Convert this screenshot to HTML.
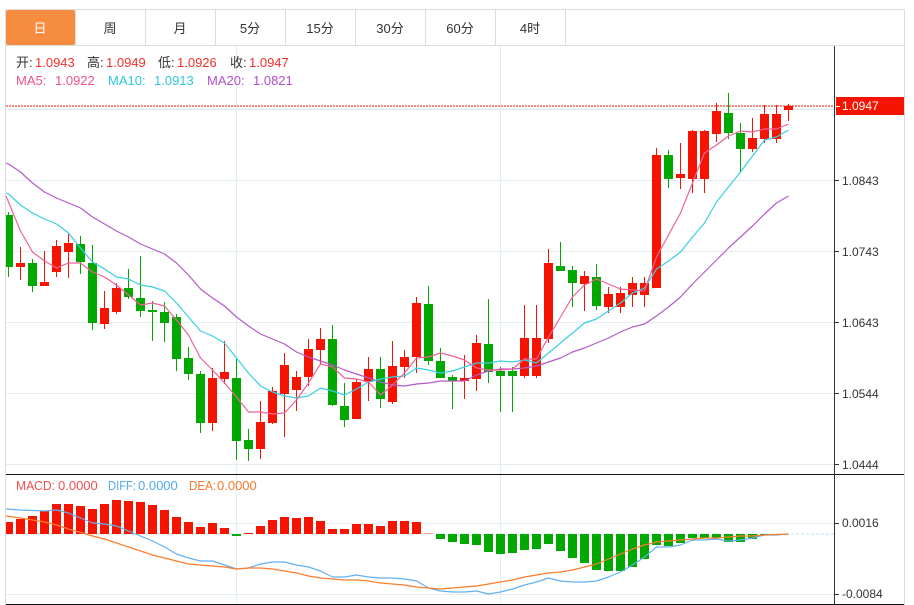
<!DOCTYPE html>
<html><head><meta charset="utf-8"><style>
html,body{margin:0;padding:0;background:#fff;width:914px;height:605px;overflow:hidden}
svg{position:absolute;left:0;top:0}
text{font-family:"Liberation Sans","Noto Sans CJK SC",sans-serif}
.tab{font-size:13px;text-anchor:middle;fill:#333}
.lg{font-size:13px}
.ax{font-size:12px;fill:#333}
</style></head><body>
<svg width="914" height="605" viewBox="0 0 914 605" xmlns="http://www.w3.org/2000/svg">
<g shape-rendering="crispEdges">
<path d="M5 9h900v1H5zM5 45h900v1H5zM5 9h1v596H5zM904 9h1v596h-1zM75 10h1v35h-1zM145 10h1v35h-1zM215 10h1v35h-1zM285 10h1v35h-1zM355 10h1v35h-1zM425 10h1v35h-1zM495 10h1v35h-1zM565 10h1v35h-1z" fill="#dddddd"/>
<path d="M6 109h828v1H6zM6 180h828v1H6zM6 251h828v1H6zM6 322h828v1H6zM6 393h828v1H6zM6 464h828v1H6zM6 523h828v1H6zM6 594h828v1H6zM236 46h1v558h-1zM500 46h1v558h-1z" fill="#e4edf2"/>
<rect x="6" y="10" width="69" height="35" rx="2" fill="#f58c40" shape-rendering="auto"/>
<path d="M6 474h898v1H6zM6 604h898v1H6z" fill="#111"/>
<path d="M834 46h1v558h-1zM835 180h4v1h-4zM835 251h4v1h-4zM835 322h4v1h-4zM835 393h4v1h-4zM835 464h4v1h-4zM835 523h4v1h-4zM835 594h4v1h-4z" fill="#333"/>
<rect x="836" y="97" width="68" height="18" fill="#f61300"/>
<rect x="836" y="106" width="4" height="1" fill="#fff"/>
<line x1="6" y1="106" x2="834" y2="106" stroke="#f8887c" stroke-width="2" stroke-dasharray="2 1"/>
<line x1="6" y1="534" x2="834" y2="534" stroke="#bfe3f2" stroke-width="1" stroke-dasharray="3 2"/>

<path fill="#f61300" d="M16 263h9v4h-9zM20 247h1v33h-1zM40 282h9v4h-9zM44 251h1v35h-1zM52 246h9v26h-9zM56 240h1v37h-1zM64 243h9v9h-9zM68 234h1v44h-1zM100 308h9v16h-9zM104 291h1v38h-1zM112 288h9v24h-9zM116 283h1v31h-1zM208 378h9v45h-9zM212 368h1v63h-1zM220 372h9v7h-9zM224 341h1v43h-1zM256 422h9v27h-9zM260 401h1v58h-1zM268 391h9v32h-9zM272 387h1v37h-1zM280 365h9v29h-9zM284 353h1v84h-1zM292 377h9v13h-9zM296 371h1v40h-1zM304 349h9v28h-9zM308 339h1v47h-1zM316 339h9v11h-9zM320 328h1v37h-1zM352 382h9v37h-9zM356 379h1v40h-1zM364 369h9v13h-9zM368 357h1v44h-1zM388 366h9v36h-9zM392 341h1v63h-1zM400 357h9v10h-9zM404 350h1v28h-1zM412 303h9v54h-9zM416 297h1v76h-1zM460 378h9v3h-9zM464 355h1v44h-1zM472 343h9v36h-9zM476 335h1v56h-1zM520 338h9v38h-9zM524 305h1v73h-1zM532 338h9v38h-9zM536 305h1v73h-1zM544 263h9v76h-9zM548 249h1v94h-1zM580 276h9v8h-9zM584 271h1v40h-1zM604 294h9v13h-9zM608 287h1v26h-1zM616 293h9v14h-9zM620 287h1v26h-1zM628 283h9v12h-9zM632 277h1v30h-1zM640 283h9v12h-9zM644 277h1v30h-1zM652 155h9v133h-9zM656 148h1v140h-1zM676 174h9v4h-9zM680 143h1v46h-1zM688 131h9v48h-9zM692 130h1v63h-1zM700 131h9v48h-9zM704 130h1v63h-1zM712 111h9v23h-9zM716 103h1v39h-1zM748 138h9v11h-9zM752 118h1v34h-1zM760 114h9v25h-9zM764 105h1v38h-1zM772 114h9v25h-9zM776 105h1v38h-1zM784 106h9v4h-9zM788 104h1v17h-1z"/>
<path fill="#00a800" d="M6 215h7v52H6zM8 212h1v65H8zM28 263h9v23h-9zM32 259h1v33h-1zM76 244h9v18h-9zM80 236h1v38h-1zM88 263h9v60h-9zM92 245h1v85h-1zM124 288h9v9h-9zM128 269h1v30h-1zM136 298h9v13h-9zM140 256h1v61h-1zM148 310h9v2h-9zM152 301h1v40h-1zM160 312h9v11h-9zM164 302h1v40h-1zM172 317h9v42h-9zM176 314h1v57h-1zM184 358h9v16h-9zM188 347h1v33h-1zM196 374h9v49h-9zM200 371h1v62h-1zM232 378h9v63h-9zM236 359h1v101h-1zM244 440h9v9h-9zM248 429h1v32h-1zM328 339h9v66h-9zM332 325h1v81h-1zM340 406h9v14h-9zM344 383h1v44h-1zM376 369h9v30h-9zM380 357h1v51h-1zM424 304h9v57h-9zM428 286h1v79h-1zM436 361h9v17h-9zM440 348h1v30h-1zM448 377h9v4h-9zM452 375h1v34h-1zM484 344h9v28h-9zM488 299h1v84h-1zM496 371h9v5h-9zM500 367h1v45h-1zM508 371h9v5h-9zM512 367h1v45h-1zM556 266h9v5h-9zM560 242h1v29h-1zM568 270h9v13h-9zM572 266h1v41h-1zM592 277h9v29h-9zM596 264h1v46h-1zM664 155h9v24h-9zM668 150h1v38h-1zM724 113h9v20h-9zM728 93h1v46h-1zM736 133h9v16h-9zM740 123h1v50h-1z"/>

<path fill="#f61300" d="M6 522h7v12H6zM16 519h9v15h-9zM28 516h9v18h-9zM40 511h9v23h-9zM52 504h9v30h-9zM64 504h9v30h-9zM76 506h9v28h-9zM88 509h9v25h-9zM100 504h9v30h-9zM112 500h9v34h-9zM124 501h9v33h-9zM136 502h9v32h-9zM148 505h9v29h-9zM160 510h9v24h-9zM172 517h9v17h-9zM184 522h9v12h-9zM196 527h9v7h-9zM208 523h9v11h-9zM220 528h9v6h-9zM244 533h9v1h-9zM256 526h9v8h-9zM268 520h9v14h-9zM280 517h9v17h-9zM292 518h9v16h-9zM304 517h9v17h-9zM316 521h9v13h-9zM328 529h9v5h-9zM340 529h9v5h-9zM352 524h9v10h-9zM364 524h9v10h-9zM376 526h9v8h-9zM388 521h9v13h-9zM400 521h9v13h-9zM412 522h9v12h-9z"/>
<path fill="#f5a8a0" d="M424 533h9v1h-9z"/>
<path fill="#00a800" d="M232 534h9v2h-9zM436 534h9v5h-9zM448 534h9v8h-9zM460 534h9v10h-9zM472 534h9v11h-9zM484 534h9v18h-9zM496 534h9v20h-9zM508 534h9v19h-9zM520 534h9v16h-9zM532 534h9v15h-9zM544 534h9v10h-9zM556 534h9v17h-9zM568 534h9v24h-9zM580 534h9v29h-9zM592 534h9v36h-9zM604 534h9v37h-9zM616 534h9v37h-9zM628 534h9v33h-9zM640 534h9v25h-9zM652 534h9v11h-9zM664 534h9v12h-9zM676 534h9v9h-9zM688 534h9v4h-9zM700 534h9v4h-9zM712 534h9v4h-9zM724 534h9v8h-9zM736 534h9v8h-9zM748 534h9v5h-9zM760 534h9v1h-9z"/>
</g>

<g fill="none" stroke-width="1.2" stroke-linejoin="round">
<polyline stroke="#b45ac8" points="6,163 8.5,164 20.5,172 32.5,183 44.5,192 56.5,198 68.5,203 80.5,208 92.5,217 104.5,224 116.5,231 128.5,237 140.5,244 152.5,249 164.5,254 176.5,263 188.5,275 200.5,289 212.5,298 224.5,306 236.5,317 248.5,326 260.5,334 272.5,339 284.5,344 296.5,352 308.5,357 320.5,361 332.5,365 344.5,370 356.5,374 368.5,378 380.5,382 392.5,385 404.5,386 416.5,384 428.5,383 440.5,381 452.5,381 464.5,381 476.5,375 488.5,371 500.5,369 512.5,369 524.5,368 536.5,366 548.5,362 560.5,358 572.5,352 584.5,348 596.5,343 608.5,338 620.5,332 632.5,327 644.5,324 656.5,316 668.5,307 680.5,297 692.5,284 704.5,272 716.5,260 728.5,248 740.5,237 752.5,226 764.5,214 776.5,203 788.5,196"/>
<polyline stroke="#38cfe3" points="6,193 8.5,194 20.5,205 32.5,213 44.5,219 56.5,224 68.5,233 80.5,248 92.5,262 104.5,269 116.5,277 128.5,279 140.5,285 152.5,287 164.5,291 176.5,303 188.5,317 200.5,331 212.5,336 224.5,343 236.5,358 248.5,373 260.5,386 272.5,392 284.5,396 296.5,398 308.5,396 320.5,388 332.5,391 344.5,395 356.5,389 368.5,382 380.5,379 392.5,377 404.5,376 416.5,368 428.5,370 440.5,373 452.5,371 464.5,367 476.5,363 488.5,363 500.5,361 512.5,362 524.5,360 536.5,363 548.5,353 560.5,343 572.5,333 584.5,323 596.5,319 608.5,311 620.5,303 632.5,293 644.5,288 656.5,269 668.5,261 680.5,252 692.5,237 704.5,223 716.5,202 728.5,187 740.5,172 752.5,156 764.5,140 776.5,137 788.5,130"/>
<polyline stroke="#f0629a" points="6,196 20.5,231 32.5,252 44.5,261 56.5,268 68.5,263 80.5,263 92.5,272 104.5,277 116.5,285 128.5,295 140.5,305 152.5,303 164.5,306 176.5,320 188.5,335 200.5,358 212.5,370 224.5,383 236.5,397 248.5,412 260.5,412 272.5,414 284.5,413 296.5,400 308.5,383 320.5,364 332.5,367 344.5,378 356.5,379 368.5,382 380.5,395 392.5,385 404.5,373 416.5,358 428.5,357 440.5,353 452.5,356 464.5,360 476.5,368 488.5,370 500.5,370 512.5,369 524.5,359 536.5,359 548.5,337 560.5,317 572.5,297 584.5,285 596.5,279 608.5,284 620.5,289 632.5,290 644.5,291 656.5,257 668.5,235 680.5,213 692.5,183 704.5,153 716.5,145 728.5,136 740.5,131 752.5,132 764.5,129 776.5,129 788.5,124"/>
<polyline stroke="#62b0f2" points="6,509 20.5,510 44.5,511 56.5,510 68.5,513 80.5,518 92.5,523 104.5,524 116.5,526 128.5,531 140.5,536 152.5,541 164.5,547 176.5,554 188.5,558 200.5,561 212.5,561 224.5,565 236.5,569 248.5,568 260.5,564 272.5,562 284.5,562 296.5,565 308.5,567 320.5,571 332.5,577 344.5,577 356.5,575 368.5,577 380.5,578 392.5,578 404.5,579 416.5,581 428.5,588 440.5,591 452.5,592 464.5,592 476.5,591 488.5,594 500.5,592 512.5,589 524.5,585 536.5,582 548.5,578 560.5,581 572.5,582 584.5,582 596.5,581 608.5,577 620.5,572 632.5,565 644.5,557 656.5,547 668.5,547 680.5,545 692.5,540 704.5,540 716.5,539 728.5,541 740.5,540 752.5,538 764.5,535 776.5,535 788.5,534"/>
<polyline stroke="#fb7d2c" points="6,516 20.5,518 44.5,522 56.5,525 68.5,529 92.5,536 104.5,539 116.5,543 128.5,547 140.5,551 152.5,555 164.5,558 176.5,561 188.5,564 200.5,565 212.5,566 224.5,567 236.5,569 248.5,568 260.5,568 272.5,569 284.5,571 296.5,573 308.5,576 320.5,578 332.5,579 344.5,580 356.5,580 368.5,581 380.5,583 392.5,584 404.5,585 416.5,587 428.5,588 440.5,589 452.5,588 464.5,587 476.5,586 488.5,584 500.5,582 512.5,580 524.5,577 536.5,575 548.5,573 560.5,572 572.5,570 584.5,567 596.5,564 608.5,559 620.5,554 632.5,549 644.5,545 656.5,542 668.5,541 680.5,540 692.5,539 704.5,538 716.5,538 728.5,537 740.5,536 752.5,536 764.5,535 776.5,534.5 788.5,534"/>
</g>

<text class="tab" x="40" y="33" fill="#fff" style="fill:#fff">日</text>
<text class="tab" x="110" y="33">周</text>
<text class="tab" x="180" y="33">月</text>
<text class="tab" x="250" y="33">5分</text>
<text class="tab" x="320" y="33">15分</text>
<text class="tab" x="390" y="33">30分</text>
<text class="tab" x="460" y="33">60分</text>
<text class="tab" x="530" y="33">4时</text>

<g class="lg">
<text class="lg" x="16" y="67" fill="#333">开:</text><text class="lg" x="35" y="67" fill="#f5302a">1.0943</text>
<text class="lg" x="87" y="67" fill="#333">高:</text><text class="lg" x="106" y="67" fill="#f5302a">1.0949</text>
<text class="lg" x="158" y="67" fill="#333">低:</text><text class="lg" x="177" y="67" fill="#f5302a">1.0926</text>
<text class="lg" x="230" y="67" fill="#333">收:</text><text class="lg" x="249" y="67" fill="#f5302a">1.0947</text>
<text class="lg" x="16" y="85" fill="#f0508c">MA5:</text><text class="lg" x="55" y="85" fill="#f0508c">1.0922</text>
<text class="lg" x="108" y="85" fill="#2fc7dd">MA10:</text><text class="lg" x="154" y="85" fill="#2fc7dd">1.0913</text>
<text class="lg" x="207" y="85" fill="#b050c8">MA20:</text><text class="lg" x="253" y="85" fill="#b050c8">1.0821</text>
<text class="lg" x="16" y="490" fill="#f05050" textLength="39" lengthAdjust="spacingAndGlyphs">MACD:</text><text class="lg" x="58" y="490" fill="#f05050">0.0000</text>
<text class="lg" x="108" y="490" fill="#50a8f0" textLength="28" lengthAdjust="spacingAndGlyphs">DIFF:</text><text class="lg" x="138" y="490" fill="#50a8f0">0.0000</text>
<text class="lg" x="189" y="490" fill="#f87a30" textLength="27" lengthAdjust="spacingAndGlyphs">DEA:</text><text class="lg" x="217" y="490" fill="#f87a30">0.0000</text>
</g>

<text x="842" y="110" font-size="12" style="fill:#fff;font-size:12px">1.0947</text>
<text class="ax" x="842" y="185">1.0843</text>
<text class="ax" x="842" y="256">1.0743</text>
<text class="ax" x="842" y="327">1.0643</text>
<text class="ax" x="842" y="398">1.0544</text>
<text class="ax" x="842" y="469">1.0444</text>
<text class="ax" x="842" y="527">0.0016</text>
<text class="ax" x="842" y="598">-0.0084</text>
</svg>
</body></html>
